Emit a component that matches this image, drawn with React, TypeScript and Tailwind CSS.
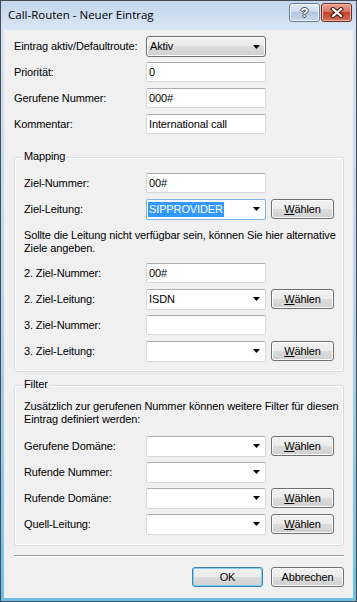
import React from 'react';

function Arrow() {
  return (
    <svg width="7" height="4" viewBox="0 0 7 4" className="shrink-0">
      <path d="M0 0H7L3.5 4Z" fill="#000" />
    </svg>
  );
}

function TextBox({ value = '' }: { value?: string }) {
  return (
    <div className="w-[120px] h-[20px] bg-white border border-[#d5d8dd] border-t-[#abadb3] rounded-[2px] flex items-center px-[2px] whitespace-nowrap">
      {value}
    </div>
  );
}

function Combo({ value = '', focused = false }: { value?: string; focused?: boolean }) {
  return (
    <div
      className={`w-[120px] h-[21px] bg-white border rounded-[2px] flex items-center pl-[1px] pr-[5px] ${
        focused ? 'border-[#7eb4ea]' : 'border-[#d5d8dd] border-t-[#abadb3]'
      }`}
    >
      <div className="flex-1 flex items-center">
        {focused ? (
          <span className="bg-[#3399ff] text-white px-[1px] leading-[15px]">{value}</span>
        ) : (
          <span className="px-[1px]">{value}</span>
        )}
      </div>
      <Arrow />
    </div>
  );
}

function DropList({ value }: { value: string }) {
  return (
    <div className="w-[120px] h-[21px] border border-[#707070] rounded-[3px] bg-[linear-gradient(#f2f2f2_0%,#ebebeb_50%,#dddddd_50%,#cfcfcf_100%)] shadow-[inset_0_0_0_1px_#fcfcfc] flex items-center pl-[3px] pr-[5px]">
      <span className="flex-1">{value}</span>
      <Arrow />
    </div>
  );
}

function WinButton({ children, w = 'w-[63px]', isDefault = false }: { children: React.ReactNode; w?: string; isDefault?: boolean }) {
  return (
    <div
      className={`${w} h-[20px] rounded-[3px] border flex items-center justify-center bg-[linear-gradient(#f2f2f2_0%,#ebebeb_50%,#dddddd_50%,#cfcfcf_100%)] ${
        isDefault ? 'border-[#3c7fb1] shadow-[inset_0_0_0_1px_#7fd0f4]' : 'border-[#707070] shadow-[inset_0_0_0_1px_#fcfcfc]'
      }`}
    >
      {children}
    </div>
  );
}

function Waehlen() {
  return (
    <WinButton>
      <span>
        <span className="underline underline-offset-[1px]">W</span>ählen
      </span>
    </WinButton>
  );
}

function Row({ label, labelW = 'w-[132px]', h = 'h-[26px]', children }: { label: string; labelW?: string; h?: string; children: React.ReactNode }) {
  return (
    <div className={`flex items-center ${h}`}>
      <div className={`${labelW} whitespace-nowrap`}>{label}</div>
      <div className="flex items-center gap-[5px]">{children}</div>
    </div>
  );
}

function Group({ title, h, children }: { title: string; h: string; children: React.ReactNode }) {
  return (
    <div className={`relative w-[330px] ${h} border border-[#d5dfe5] rounded-[3px] shadow-[inset_0_0_0_1px_#ffffff] pl-[9px]`}>
      <span className="absolute -top-[8px] left-[7px] px-[2px] bg-[#f0f0f0] leading-[13px]">{title}</span>
      {children}
    </div>
  );
}

export default function App() {
  return (
    <div className="w-[357px] h-[602px] flex flex-col border border-[#464c55] bg-[linear-gradient(180deg,#bdd2ea_0%,#d6e3f2_6%,#b9d3ee_50%,#6cc0e8_100%)] font-['Liberation_Sans',Arial,sans-serif] text-[11px] tracking-[-0.12px] text-black select-none">
      {/* title bar */}
      <div className="h-[29px] flex items-start justify-between pl-[7px] pr-[4px] bg-[linear-gradient(#c3d6ed,#dae6f4)]">
        <div className="pt-[5px] font-['Open_Sans','Noto_Sans',sans-serif] text-[11.5px] leading-[17px] tracking-normal text-[#000]">
          Call-Routen - Neuer Eintrag
        </div>
        <div className="flex gap-[1px] pt-[2px]">
          <div className="w-[31px] h-[19px] rounded-[3px] border border-[#6d7f95] bg-[linear-gradient(#e4edf7_0%,#c8d8ea_50%,#b3c8e0_50%,#c9daee_100%)] shadow-[inset_0_0_0_1px_#eef4fb] flex items-center justify-center">
            <span className="font-bold text-[13px] leading-[13px] text-white [text-shadow:-1px_0_#3e4b5c,1px_0_#3e4b5c,0_-1px_#3e4b5c,0_1px_#3e4b5c]">?</span>
          </div>
          <div className="w-[31px] h-[19px] rounded-[3px] border border-[#6e2c22] bg-[linear-gradient(#e8a493_0%,#d6715c_50%,#c2442d_50%,#d7705a_100%)] shadow-[inset_0_0_0_1px_#efb7a8] flex items-center justify-center">
            <svg width="14" height="11" viewBox="0 0 14 11">
              <path d="M3 2L11 9M11 2L3 9" stroke="#3b1712" strokeWidth="4.2" strokeLinecap="square" />
              <path d="M3 2L11 9M11 2L3 9" stroke="#ffffff" strokeWidth="2.2" strokeLinecap="square" />
            </svg>
          </div>
        </div>
      </div>

      {/* client area */}
      <div className="flex-1 mx-[3px] mb-[3px] bg-[#f0f0f0] pl-[10px] pt-[4px] flex flex-col">
        <Row label="Eintrag aktiv/Defaultroute:" h="h-[25px]">
          <DropList value="Aktiv" />
        </Row>
        <Row label="Priorität:">
          <TextBox value="0" />
        </Row>
        <Row label="Gerufene Nummer:">
          <TextBox value="000#" />
        </Row>
        <Row label="Kommentar:">
          <TextBox value="International call" />
        </Row>

        <div className="mt-[20px]">
          <Group title="Mapping" h="h-[215px]">
            <div className="pt-[12px]">
              <Row label="Ziel-Nummer:" labelW="w-[122px]">
                <TextBox value="00#" />
              </Row>
              <Row label="Ziel-Leitung:" labelW="w-[122px]">
                <Combo value="SIPPROVIDER" focused />
                <Waehlen />
              </Row>
              <p className="mt-[7px] leading-[13px] whitespace-nowrap">
                Sollte die Leitung nicht verfügbar sein, können Sie hier alternative
                <br />
                Ziele angeben.
              </p>
              <div className="mt-[5px]">
                <Row label="2. Ziel-Nummer:" labelW="w-[122px]">
                  <TextBox value="00#" />
                </Row>
                <Row label="2. Ziel-Leitung:" labelW="w-[122px]">
                  <Combo value="ISDN" />
                  <Waehlen />
                </Row>
                <Row label="3. Ziel-Nummer:" labelW="w-[122px]">
                  <TextBox />
                </Row>
                <Row label="3. Ziel-Leitung:" labelW="w-[122px]">
                  <Combo />
                  <Waehlen />
                </Row>
              </div>
            </div>
          </Group>
        </div>

        <div className="mt-[13px]">
          <Group title="Filter" h="h-[161px]">
            <p className="pt-[14px] leading-[13px] whitespace-nowrap">
              Zusätzlich zur gerufenen Nummer können weitere Filter für diesen
              <br />
              Eintrag definiert werden:
            </p>
            <div className="mt-[7px]">
              <Row label="Gerufene Domäne:" labelW="w-[122px]">
                <Combo />
                <Waehlen />
              </Row>
              <Row label="Rufende Nummer:" labelW="w-[122px]">
                <Combo />
              </Row>
              <Row label="Rufende Domäne:" labelW="w-[122px]">
                <Combo />
                <Waehlen />
              </Row>
              <Row label="Quell-Leitung:" labelW="w-[122px]">
                <Combo />
                <Waehlen />
              </Row>
            </div>
          </Group>
        </div>

        <div className="mt-[9px] w-[330px] border-t border-t-[#a0a0a0] border-b border-b-white" />

        <div className="mt-[10px] w-[330px] flex justify-end gap-[8px]">
          <WinButton w="w-[71px]" isDefault>
            OK
          </WinButton>
          <WinButton w="w-[73px]">Abbrechen</WinButton>
        </div>
      </div>
    </div>
  );
}
